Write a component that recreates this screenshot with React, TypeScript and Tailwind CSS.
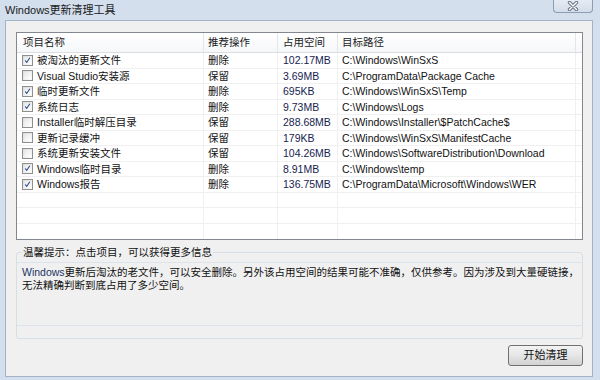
import React from "react";

type Row = {
  name: string;
  checked: boolean;
  action: string;
  size: string;
  path: string;
};

const rows: Row[] = [
  { name: "被淘汰的更新文件", checked: true, action: "删除", size: "102.17MB", path: "C:\\Windows\\WinSxS" },
  { name: "Visual Studio安装源", checked: false, action: "保留", size: "3.69MB", path: "C:\\ProgramData\\Package Cache" },
  { name: "临时更新文件", checked: true, action: "删除", size: "695KB", path: "C:\\Windows\\WinSxS\\Temp" },
  { name: "系统日志", checked: true, action: "删除", size: "9.73MB", path: "C:\\Windows\\Logs" },
  { name: "Installer临时解压目录", checked: false, action: "保留", size: "288.68MB", path: "C:\\Windows\\Installer\\$PatchCache$" },
  { name: "更新记录缓冲", checked: false, action: "保留", size: "179KB", path: "C:\\Windows\\WinSxS\\ManifestCache" },
  { name: "系统更新安装文件", checked: false, action: "保留", size: "104.26MB", path: "C:\\Windows\\SoftwareDistribution\\Download" },
  { name: "Windows临时目录", checked: true, action: "删除", size: "8.91MB", path: "C:\\Windows\\temp" },
  { name: "Windows报告", checked: true, action: "删除", size: "136.75MB", path: "C:\\ProgramData\\Microsoft\\Windows\\WER" },
];

// Win7 style checkbox
function CheckBox({ checked }: { checked: boolean }) {
  return (
    <div className="w-[11px] h-[11px] shrink-0 border border-[#8e8f8f] bg-gradient-to-br from-[#dcdcdc] to-[#fbfbfb] p-[1px]">
      <div className="w-full h-full bg-gradient-to-br from-[#e6e6e6] to-white flex items-center justify-center">
        {checked && (
          <svg width="9" height="9" viewBox="0 0 9 9">
            <path d="M1.5 4.5 L3.5 7 L7.5 1" fill="none" stroke="#25478a" strokeWidth="1.4" />
          </svg>
        )}
      </div>
    </div>
  );
}

function CloseButton() {
  return (
    <div className="ml-auto mr-[7px] self-start w-[40px] h-[13px] rounded-b-[4px] border border-t-0 border-[#8d9db3] bg-gradient-to-b from-[#e4ebf4] to-[#d3dde9] flex items-center justify-center">
      <svg width="12" height="10" viewBox="0 0 12 10">
        <path d="M2.5 1.5 L9.5 8.5 M9.5 1.5 L2.5 8.5" stroke="#6a7584" strokeWidth="3.4" strokeLinecap="round" />
        <path d="M2.5 1.5 L9.5 8.5 M9.5 1.5 L2.5 8.5" stroke="#ffffff" strokeWidth="1.4" strokeLinecap="round" />
      </svg>
    </div>
  );
}

export default function App() {
  return (
    <div className="w-[600px] h-[380px] bg-[#d3dfed] flex flex-col font-['Liberation_Sans','Noto_Sans_CJK_SC',sans-serif] text-[10.5px] text-[#111]">
      {/* Title bar */}
      <div className="h-[20px] flex items-start">
        <span className="pl-[5px] pt-[3px] text-[11px] leading-[14px] text-[#1a1a1a]">Windows更新清理工具</span>
        <CloseButton />
      </div>

      {/* Client area */}
      <div className="ml-[5px] mr-[7px] mb-[3px] flex-1 border border-[#a3b3c7] bg-[#f0f0f0] flex flex-col pl-[10px] pr-[9px] pt-[11px]">
        {/* List view */}
        <div className="h-[208px] border border-[#828790] bg-white flex flex-col">
          <div className="h-[20px] flex border-b border-[#dadde2] bg-gradient-to-b from-white to-[#f6f7f9] text-[#1a1a1a]">
            <div className="w-[187px] pl-[6px] flex items-center border-r border-[#e3e6ea]">项目名称</div>
            <div className="w-[74px] pl-[4px] flex items-center border-r border-[#e3e6ea]">推荐操作</div>
            <div className="w-[60px] pl-[5px] flex items-center border-r border-[#e3e6ea]">占用空间</div>
            <div className="w-[238px] pl-[4px] flex items-center border-r border-[#e3e6ea]">目标路径</div>
            <div className="flex-1" />
          </div>
          {rows.map((r) => (
            <div key={r.name} className="h-[15.5px] flex border-b border-[#f0f0f0] leading-[14px]">
              <div className="w-[187px] pl-[5px] flex items-center gap-[4px] border-r border-[#f0f0f0] whitespace-nowrap">
                <CheckBox checked={r.checked} />
                <span>{r.name}</span>
              </div>
              <div className="w-[74px] pl-[4px] flex items-center border-r border-[#f0f0f0]">{r.action}</div>
              <div className="w-[60px] pl-[5px] flex items-center border-r border-[#f0f0f0] text-[#17234f]">{r.size}</div>
              <div className="w-[238px] pl-[4px] flex items-center border-r border-[#f0f0f0] whitespace-nowrap">{r.path}</div>
              <div className="flex-1" />
            </div>
          ))}
          {[0, 1, 2].map((i) => (
            <div key={i} className="h-[15.5px] flex border-b border-[#f0f0f0] last:border-b-0">
              <div className="w-[187px] border-r border-[#f0f0f0]" />
              <div className="w-[74px] border-r border-[#f0f0f0]" />
              <div className="w-[60px] border-r border-[#f0f0f0]" />
              <div className="w-[238px] border-r border-[#f0f0f0]" />
              <div className="flex-1" />
            </div>
          ))}
        </div>

        {/* Hint group box */}
        <div className="relative mt-[12px] h-[87px] border border-[#d5dfe5] rounded-[3px] pt-[9px]">
          <span className="absolute -top-[8px] left-[5px] px-[1px] bg-[#f0f0f0] leading-[14px]">
            温馨提示：点击项目，可以获得更多信息
          </span>
          <div className="h-[64px] border-y border-[#dce3ea] pl-[5px] pt-[3px] leading-[13px] text-[#111]">
            <div className="whitespace-nowrap">
              <span className="text-[#1c3466]">Windows</span>更新后淘汰的老文件，可以安全删除。另外该占用空间的结果可能不准确，仅供参考。因为涉及到大量硬链接，
            </div>
            <div className="whitespace-nowrap">无法精确判断到底占用了多少空间。</div>
          </div>
        </div>

        {/* Action button */}
        <button className="self-end mt-[6px] w-[75px] h-[21px] rounded-[3px] border border-[#707070] bg-gradient-to-b from-[#f3f3f3] via-[#e6e6e6] to-[#d2d2d2] text-[11px] text-[#111] flex items-center justify-center">
          开始清理
        </button>
      </div>
    </div>
  );
}
